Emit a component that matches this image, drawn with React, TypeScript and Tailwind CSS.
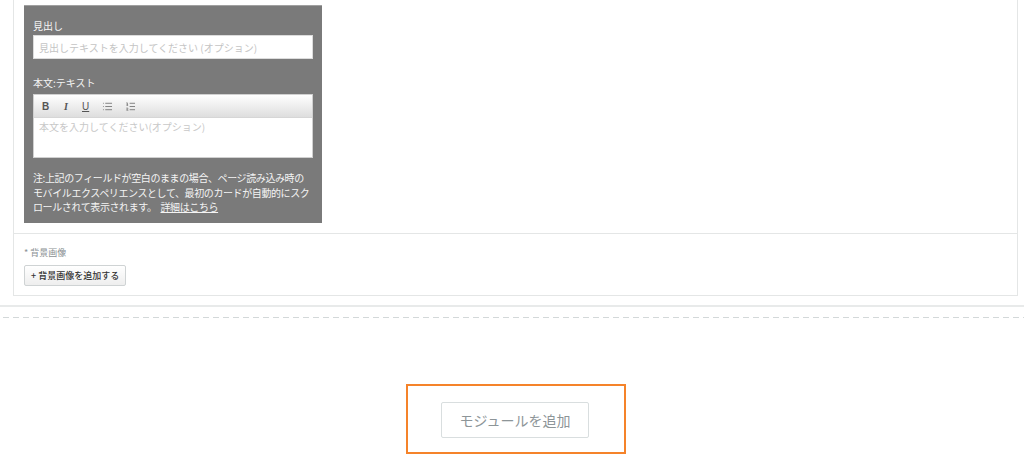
import { List, ListOrdered } from "lucide-react";

const font = { fontFamily: '"Noto Sans CJK JP", "Noto Sans", sans-serif' };

const Toolbar = () => (
  <div className="flex h-[23px] items-center gap-[12px] border-b border-[#d6d6d6] bg-[linear-gradient(#ffffff,#dedede)] pl-[8px] text-[10px] text-[#555]">
    <span className="w-[8px] font-bold [font-family:'Liberation_Sans',sans-serif]">B</span>
    <span className="w-[8px] pl-[2px] font-bold italic [font-family:'Liberation_Serif',serif]">I</span>
    <span className="w-[8px] underline [font-family:'Liberation_Sans',sans-serif]">U</span>
    <List size={11} strokeWidth={1.5} />
    <ListOrdered size={11} strokeWidth={1.5} />
  </div>
);

export default function App() {
  return (
    <div className="h-[458px] w-[1024px] overflow-hidden bg-white" style={font}>
      <div className="ml-[13px] w-[1005px] border-x border-b border-[#e4e6e6]">
        <div className="pb-[10px] pl-[10px] pt-[5px]">
          <div className="h-[218px] w-[298px] border-t border-[#a0a0a0] bg-[#7a7a7a] px-[9px] pt-[13px] text-[#f4f4f4]">
            <div className="text-[10px] leading-[14px]">見出し</div>
            <div className="mt-[2px] flex h-[24px] items-center border border-[#dcdcdc] bg-white pl-[5px] text-[10px] text-[#c4c4c4]">
              見出しテキストを入力してください (オプション)
            </div>
            <div className="mt-[17px] text-[10px] leading-[14px]">本文:テキスト</div>
            <div className="mt-[4px] h-[64px] border border-[#d0d0d0] bg-white">
              <Toolbar />
              <div className="pl-[5px] pt-[1px] text-[10px] text-[#c8c8c8]">本文を入力してください(オプション)</div>
            </div>
            <p className="mt-[13px] whitespace-nowrap text-[10px] leading-[14.5px] tracking-[-0.4px]">
              注:上記のフィールドが空白のままの場合、ページ読み込み時の
              <br />
              モバイルエクスペリエンスとして、最初のカードが自動的にスク
              <br />
              ロールされて表示されます。
              <span className="ml-[4px] underline">詳細はこちら</span>
            </p>
          </div>
        </div>
        <div className="h-[62px] border-t border-[#e4e6e6] pl-[10px] pt-[13px]">
          <div className="text-[9px] leading-[12px] text-[#8a9194]">* 背景画像</div>
          <button className="mt-[6px] h-[21px] rounded-[2px] border border-[#cfd3d4] bg-[linear-gradient(#ffffff,#eeeeee)] px-[6px] text-[9px] font-medium text-[#333]">
            + 背景画像を追加する
          </button>
        </div>
      </div>
      <div className="mt-[9px] h-[2px] bg-[#e8eaea]" />
      <div className="ml-[3px] mt-[10px] h-px bg-[repeating-linear-gradient(90deg,#d3d8d9_0_6px,transparent_6px_10px)]" />
      <div className="mt-[66px] flex pl-[406px]">
        <div className="h-[70px] w-[220px] border-2 border-[#f5832a] pl-[33px] pt-[16px]">
          <button className="h-[36px] w-[148px] rounded-[2px] border border-[#d9dedf] bg-white text-[14px] text-[#8d9598]">
            モジュールを追加
          </button>
        </div>
      </div>
    </div>
  );
}
